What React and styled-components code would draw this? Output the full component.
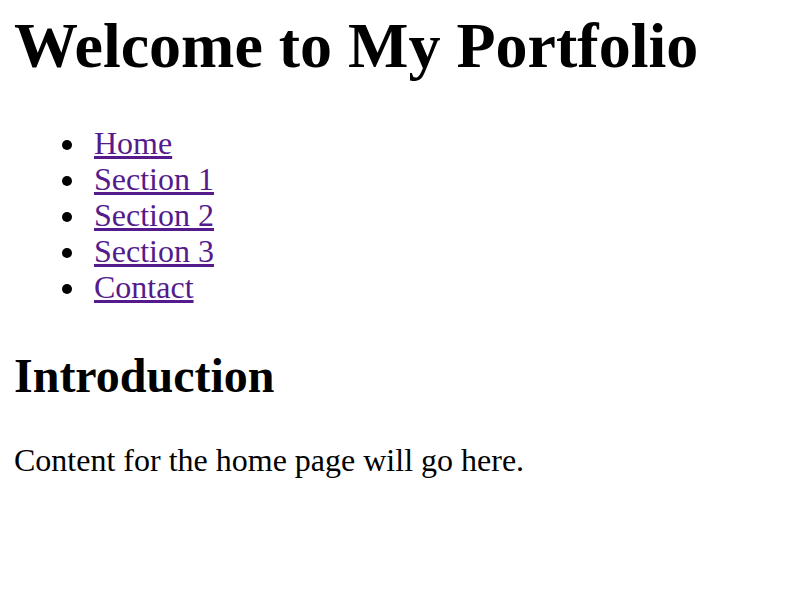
import React from 'react';
import styled, { createGlobalStyle } from 'styled-components';

const GlobalStyle = createGlobalStyle`
  body {
    margin: 0;
    font-family: "Liberation Serif", "Times New Roman", serif;
    font-size: 32px;
    line-height: 1.125;
    color: #000;
    background: #fff;
  }
`;

const Page = styled.div`
  padding: 10px 14px 0;
`;

const Title = styled.h1`
  font-size: 64px;
  line-height: 72px;
  font-weight: bold;
  margin: 0 0 43px;
`;

const NavList = styled.ul`
  margin: 0 0 44px;
  padding-left: 80px;
  list-style: none;
`;

const NavItem = styled.li`
  display: flex;
  align-items: flex-start;
`;

const Bullet = styled.span`
  flex: none;
  width: 10px;
  height: 10px;
  margin: 15px 22px 0 -32px;
  border-radius: 50%;
  background: #000;
`;

const NavLink = styled.a`
  color: #551a8b;
  text-decoration: underline;
`;

const SectionTitle = styled.h2`
  font-size: 48px;
  line-height: 54px;
  font-weight: bold;
  margin: 0 0 39px;
`;

const Text = styled.p`
  margin: 0;
`;

const links = ['Home', 'Section 1', 'Section 2', 'Section 3', 'Contact'];

const App = () => {
  return (
    <Page>
      <GlobalStyle />
      <header>
        <Title>Welcome to My Portfolio</Title>
        <nav>
          <NavList>
            {links.map((l) => (
              <NavItem key={l}>
                <Bullet />
                <NavLink href="#">{l}</NavLink>
              </NavItem>
            ))}
          </NavList>
        </nav>
      </header>
      <main>
        <section>
          <SectionTitle>Introduction</SectionTitle>
          <Text>Content for the home page will go here.</Text>
        </section>
      </main>
    </Page>
  );
};

export default App;
